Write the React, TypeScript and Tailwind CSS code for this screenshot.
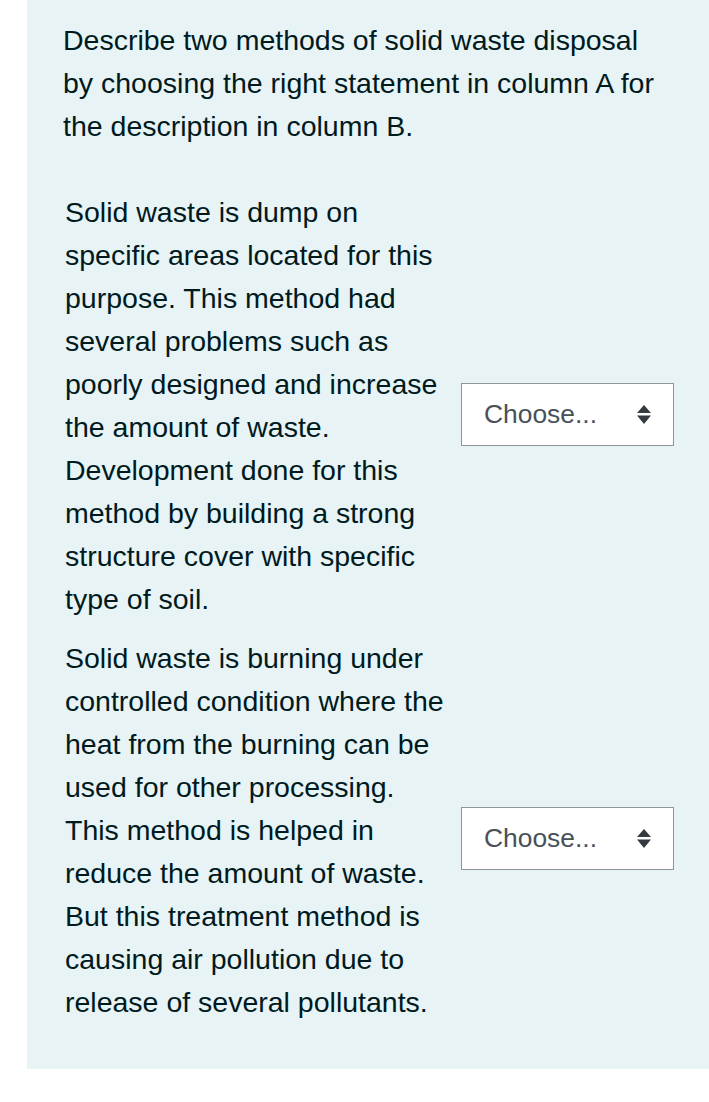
import React from 'react';

const rows = [
  'Solid waste is dump on specific areas located for this purpose. This method had several problems such as poorly designed and increase the amount of waste. Development done for this method by building a strong structure cover with specific type of soil.',
  'Solid waste is burning under controlled condition where the heat from the burning can be used for other processing. This method is helped in reduce the amount of waste. But this treatment method is causing air pollution due to release of several pollutants.',
];

function ChooseBox() {
  return (
    <div className="ml-[11px] flex h-[63px] w-[213px] shrink-0 items-center border-[1.5px] border-[#8f959e] bg-white pl-[22px] pr-[22px]">
      <span className="flex-1 text-[26.4px] leading-none text-[#495057]">Choose...</span>
      <svg width="14" height="19" viewBox="0 0 14 19" className="text-[#343a40]">
        <path d="M7 0 L14 8 L0 8 Z" fill="currentColor" />
        <path d="M0 10.5 L14 10.5 L7 19 Z" fill="currentColor" />
      </svg>
    </div>
  );
}

export default function App() {
  return (
    <div
      className="min-h-[1102px] bg-white"
      style={{ fontFamily: '"Liberation Sans", Arial, sans-serif' }}
    >
      <div className="ml-[27px] h-[1069px] bg-[#e7f3f5] pl-[36px] pt-[19px] text-[28.5px] leading-[43px] text-[#001a1e]">
        <p className="w-[602px]">
          Describe two methods of solid waste disposal by choosing the right statement in column A for the description in column B.
        </p>
        <div className="mt-[43px] pl-[2px]">
          {rows.map((text, i) => (
            <div key={i} className="flex items-center">
              <p className="mb-[16px] w-[385px] shrink-0">{text}</p>
              <ChooseBox />
            </div>
          ))}
        </div>
      </div>
    </div>
  );
}
